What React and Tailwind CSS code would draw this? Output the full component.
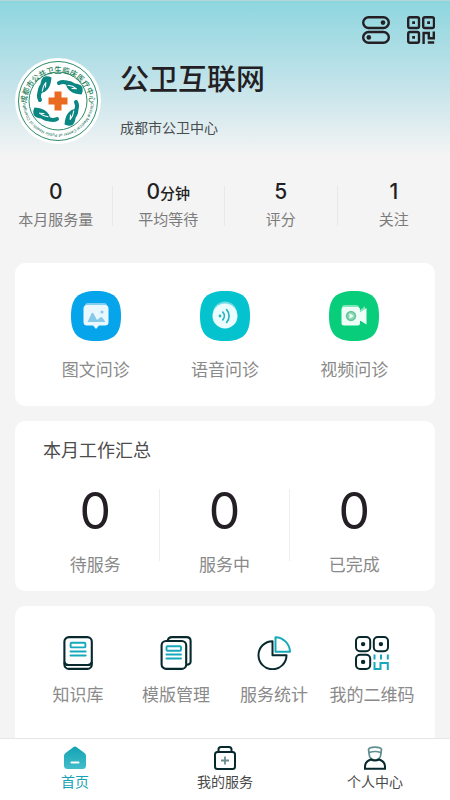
import React, { useState } from 'react';

const STATS = [
  { label: '本月服务量', value: '0' },
  { label: '平均等待', value: '0', unit: '分钟' },
  { label: '评分', value: '5' },
  { label: '关注', value: '1' },
];

const SUMMARY = [
  { label: '待服务', value: 0 },
  { label: '服务中', value: 0 },
  { label: '已完成', value: 0 },
];

function Hand({ angle }) {
  return (
    <g transform={`rotate(${angle})`}>
      <path d="M1 -18Q6 -20.5 11 -17" fill="none" stroke="#0b8783" strokeWidth="4" strokeLinecap="round" />
      <path d="M7 -20C11 -21 14 -19.5 17 -17.5C21 -17 24 -15.5 24.5 -13C25 -10.5 24.5 -8.5 23.5 -6.5C18 -7 12.5 -8 9 -13.5Z" fill="#0b8783" />
      <path d="M10 -15.7Q15 -15.3 18.5 -12.2L14 -12.5" fill="none" stroke="#fff" strokeWidth="1.1" strokeLinecap="round" strokeLinejoin="round" />
    </g>
  );
}

function HospitalLogo() {
  return (
    <svg viewBox="0 0 86 86" className="h-[86px] w-[86px] shrink-0" role="img" aria-label="成都市公共卫生临床医疗中心">
      <defs>
        <path id="ring-top" d="M11.5 46A31.5 31.5 0 1 1 74.5 46" />
        <path id="ring-bottom" d="M76 43A33 33 0 0 1 10 43" />
      </defs>
      <circle cx="43" cy="43" r="43" fill="#fff" />
      <circle cx="43" cy="43" r="39.5" fill="none" stroke="#2b8b68" strokeWidth="1" />
      <circle cx="43" cy="43" r="29" fill="none" stroke="#2b8b68" strokeWidth="1" />
      <text fill="#1f7f5c" fontSize="7.5" fontWeight="500" textAnchor="middle">
        <textPath href="#ring-top" startOffset="50%">成都市公共卫生临床医疗中心</textPath>
      </text>
      <text fill="#2d7d66" fontSize="4" fontWeight="500" textAnchor="middle">
        <textPath href="#ring-bottom" startOffset="50%">Clinical Medical Center of Public Health of Chengdu</textPath>
      </text>
      <g transform="translate(43 43)">
        <Hand angle={0} />
        <Hand angle={90} />
        <Hand angle={180} />
        <Hand angle={270} />
        <path d="M-3.5 -9.5h7v6h6v7h-6v6h-7v-6h-6v-7h6z" fill="#ea6a20" />
      </g>
    </svg>
  );
}

function SwitchIcon() {
  return (
    <svg viewBox="0 0 28 28" className="h-7 w-7" fill="none" stroke="#231f24" strokeWidth="2.4">
      <rect x="1.2" y="1.2" width="25.6" height="10.8" rx="5.4" />
      <rect x="1.2" y="16" width="25.6" height="10.8" rx="5.4" />
      <circle cx="21" cy="6.6" r="2.3" fill="#231f24" stroke="none" />
      <circle cx="6.8" cy="21.4" r="2.3" fill="#231f24" stroke="none" />
    </svg>
  );
}

function QrIcon() {
  return (
    <svg viewBox="0 0 28 28" className="h-7 w-7" fill="none" stroke="#231f24" strokeWidth="2.4">
      <rect x="1.2" y="1.2" width="10.8" height="10.8" rx="1.8" />
      <rect x="16.2" y="1.2" width="10.8" height="10.8" rx="1.8" />
      <rect x="1.2" y="16" width="10.8" height="10.8" rx="1.8" />
      <path d="M16.6 28V17h5.2v5.2h5V15.6M20.8 26.5h6.4" />
      <path d="M5.2 5.2h2.8v2.8h-2.8zM20.2 5.2H23v2.8h-2.8zM5.2 20h2.8v2.8h-2.8z" fill="#231f24" stroke="none" />
    </svg>
  );
}

const SQUIRCLE = 'M25 0C43 0 50 7 50 25S43 50 25 50S0 43 0 25S7 0 25 0Z';

function ImageTextIcon() {
  return (
    <svg viewBox="0 0 50 50" className="h-[50px] w-[50px]">
      <path d={SQUIRCLE} fill="#06a4eb" />
      <rect x="14" y="12" width="22" height="16" rx="3" fill="#7fd0f4" />
      <path d="M16 14h18a3.5 3.5 0 0 1 3.5 3.5V31a3.5 3.5 0 0 1-3.5 3.5h-6L25 38l-3-3.5h-6a3.5 3.5 0 0 1-3.5-3.5V17.5A3.5 3.5 0 0 1 16 14Z" fill="#e9f8ff" />
      <path d="M16.5 31L20.5 22.5Q21.5 20.8 22.5 22.5L26 29L29.5 26.2Q30.5 25.5 31.3 26.5L34.5 31Z" fill="#86c9e8" />
      <circle cx="31" cy="21" r="1.6" fill="#86c9e8" />
    </svg>
  );
}

function VoiceIcon() {
  return (
    <svg viewBox="0 0 50 50" className="h-[50px] w-[50px]">
      <path d={SQUIRCLE} fill="#05c2cf" />
      <circle cx="25" cy="22.5" r="12" fill="#71dce3" />
      <circle cx="25" cy="25" r="12.5" fill="#eafcfd" />
      <circle cx="20" cy="25" r="1.4" fill="#2bb4c0" />
      <path d="M22.8 21.2a5.6 5.6 0 0 1 0 7.6M26.6 18.6a9.5 9.5 0 0 1 0 12.8" fill="none" stroke="#2bb4c0" strokeWidth="1.7" strokeLinecap="round" />
    </svg>
  );
}

function VideoIcon() {
  return (
    <svg viewBox="0 0 50 50" className="h-[50px] w-[50px]">
      <path d={SQUIRCLE} fill="#08ce7b" />
      <rect x="13" y="14" width="17" height="16" rx="2.5" fill="#80e5b8" />
      <path d="M30 20l6-5v15h-6z" fill="#80e5b8" />
      <path d="M15 16h13.5a2.5 2.5 0 0 1 2.5 2.5v3L37.5 17v16.5L31 29.5v2.5a2.5 2.5 0 0 1-2.5 2.5H15a2.5 2.5 0 0 1-2.5-2.5V18.5A2.5 2.5 0 0 1 15 16Z" fill="#effdf7" />
      <circle cx="22" cy="25" r="5.3" fill="#8bd9b4" />
      <circle cx="22" cy="25" r="4.3" fill="none" stroke="#59bd90" strokeWidth="1" />
      <path d="M20.5 22.3v5.4l4.3-2.7z" fill="#effdf7" />
    </svg>
  );
}

function BookIcon() {
  return (
    <svg viewBox="0 0 34 34" className="h-[34px] w-[34px]" fill="none" stroke="#07282d" strokeWidth="2.1">
      <rect x="3.4" y="1.1" width="27.4" height="31.8" rx="4.5" />
      <path d="M3.4 26q.5 3 4 3h19.4q3.5 0 4-3" />
      <g stroke="#17a9bb" strokeWidth="1.9" strokeLinecap="round">
        <rect x="9.6" y="6.8" width="14.8" height="4.6" rx="1" />
        <path d="M9.5 15.5h15.2M9.5 19.5h15.2" />
      </g>
    </svg>
  );
}

function TemplateIcon() {
  return (
    <svg viewBox="0 0 34 34" className="h-[34px] w-[34px]" fill="none" stroke="#07282d" strokeWidth="2.1">
      <path d="M8.6 5C9 2.3 10 1.1 13 1.1h14.5Q31.6 1.1 31.6 5v20.5q0 3-4 3.3" />
      <rect x="2.6" y="5" width="24.6" height="27.9" rx="4.5" />
      <g stroke="#17a9bb" strokeWidth="1.9" strokeLinecap="round">
        <rect x="7.5" y="10.3" width="14.5" height="4.4" rx="1" />
        <path d="M7.5 18.5h14.5M7.5 22.5h14.5" />
      </g>
    </svg>
  );
}

function PieIcon() {
  return (
    <svg viewBox="0 0 34 34" className="h-[34px] w-[34px]" fill="none" strokeWidth="2" strokeLinejoin="round">
      <path d="M15.5 5.2A14 14 0 1 0 29.5 19.2H15.5Z" stroke="#07282d" />
      <path d="M18.5 1.2V15.8H33A15 15 0 0 0 18.5 1.2Z" stroke="#17a9bb" />
    </svg>
  );
}

function MyQrIcon() {
  return (
    <svg viewBox="0 0 34 34" className="h-[34px] w-[34px]" fill="none" stroke="#07282d" strokeWidth="2">
      <rect x="1" y="1" width="14.2" height="14.2" rx="4" />
      <rect x="18.8" y="1" width="14.2" height="14.2" rx="4" />
      <rect x="1" y="18.8" width="14.2" height="14.2" rx="4" />
      <g fill="#07282d" stroke="none">
        <circle cx="8.1" cy="8.1" r="2.2" />
        <circle cx="25.9" cy="8.1" r="2.2" />
        <circle cx="8.1" cy="25.9" r="2.2" />
      </g>
      <path d="M19.5 18.5v5M26 18.5v5M32.8 18.5v5M19.5 26v7h6v-6h7.3v7" stroke="#17a9bb" />
    </svg>
  );
}

function HomeIcon() {
  return (
    <svg viewBox="0 0 24 24" className="h-6 w-6">
      <defs>
        <linearGradient id="home-fill" x1="0" y1="0" x2="0" y2="1">
          <stop offset="0" stopColor="#12a3b4" />
          <stop offset="1" stopColor="#43bdca" />
        </linearGradient>
      </defs>
      <path d="M10.3 1.2Q12 0 13.7 1.2L21.5 7Q23 8.2 23 10v9.5Q23 23 19.5 23h-15Q1 23 1 19.5V10Q1 8.2 2.5 7Z" fill="url(#home-fill)" />
      <path d="M8.5 16.5h7" stroke="#fff" strokeWidth="2" strokeLinecap="round" />
    </svg>
  );
}

function ServiceIcon() {
  return (
    <svg viewBox="0 0 24 24" className="h-6 w-6" fill="none" stroke="#07282d" strokeWidth="2">
      <rect x="2" y="6" width="20" height="17" rx="2.5" />
      <path d="M5.5 5.5V3.5Q5.5 1 8 1h8q2.5 0 2.5 2.5v2" />
      <path d="M12 10.5v8M8 14.5h8" stroke="#6b8d8d" strokeWidth="1.8" />
    </svg>
  );
}

function ProfileIcon() {
  return (
    <svg viewBox="0 0 24 24" className="h-6 w-6" fill="none" stroke="#5f8d90" strokeWidth="1.7">
      <path d="M6.2 7.5L5.5 3.5Q6 1.2 12 1.2T18.5 3.5L17.8 7.5" />
      <path d="M6.2 6.5q5.8-2 11.6 0v2a5.8 5.5 0 0 1-11.6 0Z" />
      <path d="M7.8 13.5Q12 15.5 16.2 13.5Q22 15.5 22 20.5V22.8H2V20.5Q2 15.5 7.8 13.5Z" stroke="#07282d" strokeWidth="2" />
    </svg>
  );
}

const CONSULTS = [
  { label: '图文问诊', Icon: ImageTextIcon },
  { label: '语音问诊', Icon: VoiceIcon },
  { label: '视频问诊', Icon: VideoIcon },
];

const TOOLS = [
  { label: '知识库', Icon: BookIcon },
  { label: '模版管理', Icon: TemplateIcon },
  { label: '服务统计', Icon: PieIcon },
  { label: '我的二维码', Icon: MyQrIcon },
];

const TABS = [
  { id: 'home', label: '首页', Icon: HomeIcon },
  { id: 'service', label: '我的服务', Icon: ServiceIcon },
  { id: 'profile', label: '个人中心', Icon: ProfileIcon },
];

export default function App() {
  const [tab, setTab] = useState('home');

  return (
    <div className="flex h-screen flex-col bg-[#f4f4f4] font-['Inter','Noto_Sans_CJK_SC',sans-serif] text-[#231f24]">
      <main className="min-h-0 flex-1 overflow-y-auto [scrollbar-width:none]">
        <header className="border-t border-[#b5d5da] bg-linear-to-b from-[#8dd6df] via-[#bfe2e9] to-[#f4f4f4] px-[15px] pt-[15px] pb-3">
          <div className="flex justify-end gap-[17px]">
            <button type="button" aria-label="切换">
              <SwitchIcon />
            </button>
            <button type="button" aria-label="二维码">
              <QrIcon />
            </button>
          </div>
          <div className="mt-[14px] flex gap-[19px]">
            <HospitalLogo />
            <div>
              <h1 className="mt-1 text-[29px] leading-9 font-medium">公卫互联网</h1>
              <p className="mt-5 text-sm leading-5 text-[#4a4d50]">成都市公卫中心</p>
            </div>
          </div>
        </header>

        <section className="mt-[30px] grid grid-cols-4 divide-x divide-[#e8e8e8]">
          {STATS.map((item) => (
            <div key={item.label} className="flex h-10 flex-col items-center justify-center whitespace-nowrap">
              <p className="text-[21px] leading-7 font-medium">
                {item.value}
                {item.unit ? <span className="text-[15px] leading-none">{item.unit}</span> : null}
              </p>
              <p className="text-[15px] leading-7 text-[#7b7b7b]">{item.label}</p>
            </div>
          ))}
        </section>

        <div className="mt-[37px] flex flex-col gap-[15px] px-[15px]">
          <section className="grid grid-cols-3 rounded-[10px] bg-white px-4 pt-7 pb-6">
            {CONSULTS.map(({ label, Icon }) => (
              <button key={label} type="button" className="flex flex-col items-center gap-[17px]">
                <Icon />
                <span className="text-[17px] leading-6 text-[#8a8a8a]">{label}</span>
              </button>
            ))}
          </section>

          <section className="rounded-[10px] bg-white px-4 pt-4 pb-[30px]">
            <h2 className="px-3 text-lg leading-7 text-[#4c4c4c]">本月工作汇总</h2>
            <div className="mt-6 grid grid-cols-3 divide-x divide-[#eeeeee]">
              {SUMMARY.map((item) => (
                <div key={item.label} className="flex h-[72px] flex-col items-center">
                  <p className="text-[50px] leading-[44px]">{item.value}</p>
                  <p className="mt-5 text-[17px] leading-6 text-[#8a8a8a]">{item.label}</p>
                </div>
              ))}
            </div>
          </section>

          <section className="grid grid-cols-4 rounded-[10px] bg-white px-[14px] pt-[30px] pb-12">
            {TOOLS.map(({ label, Icon }) => (
              <button key={label} type="button" className="flex flex-col items-center gap-[13px] whitespace-nowrap">
                <Icon />
                <span className="text-[17px] leading-6 text-[#8a8a8a]">{label}</span>
              </button>
            ))}
          </section>
        </div>
      </main>

      <nav className="grid grid-cols-3 border-t border-[#e6e6e6] bg-white pt-[7px] pb-2">
        {TABS.map(({ id, label, Icon }) => (
          <button
            key={id}
            type="button"
            onClick={() => setTab(id)}
            className={`flex flex-col items-center gap-[2px] text-sm leading-5 ${
              tab === id ? 'text-[#17a3b3]' : 'text-[#4a4a4a]'
            }`}
          >
            <Icon />
            {label}
          </button>
        ))}
      </nav>
    </div>
  );
}
